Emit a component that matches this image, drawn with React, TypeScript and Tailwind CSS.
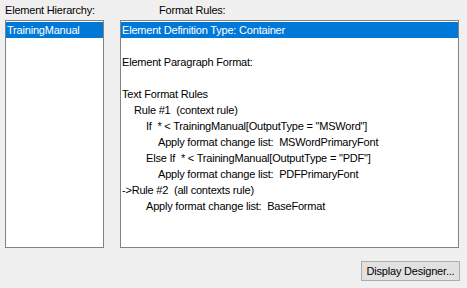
import React from "react";

const rules: { text: string; indent: number; selected?: boolean }[] = [
    { text: "Element Definition Type: Container", indent: 0, selected: true },
    { text: "", indent: 0 },
    { text: "Element Paragraph Format:", indent: 0 },
    { text: "", indent: 0 },
    { text: "Text Format Rules", indent: 0 },
    { text: "Rule #1  (context rule)", indent: 1 },
    { text: "If  * < TrainingManual[OutputType = \"MSWord\"]", indent: 2 },
    { text: "Apply format change list:  MSWordPrimaryFont", indent: 3 },
    { text: "Else If  * < TrainingManual[OutputType = \"PDF\"]", indent: 2 },
    { text: "Apply format change list:  PDFPrimaryFont", indent: 3 },
    { text: "->Rule #2  (all contexts rule)", indent: 0 },
    { text: "Apply format change list:  BaseFormat", indent: 2 },
];

const indentClass = ["pl-[1px]", "pl-[13px]", "pl-[25px]", "pl-[37px]"];

export default function App() {
    return (
        <div className="w-[467px] h-[288px] bg-[#f0f0f0] text-black text-[11px] tracking-[-0.2px] leading-[16px] flex flex-col" style={{ fontFamily: '"Liberation Sans", Arial, sans-serif' }}>
            {/* labels */}
            <div className="flex h-[20px] items-center">
                <span className="pl-[5px] w-[159px]">Element Hierarchy:</span>
                <span>Format Rules:</span>
            </div>

            {/* lists */}
            <div className="flex pl-[5px] gap-[16px]">
                <div className="w-[99px] h-[228px] bg-white border border-[#828282] py-[1px]">
                    <div className="h-[16px] bg-[#0078d7] text-white pl-[1px] whitespace-pre">TrainingManual</div>
                </div>
                <div className="w-[339px] h-[228px] bg-white border border-[#828282] py-[1px]">
                    {rules.map((r, i) => (
                        <div key={i} className={`h-[16px] whitespace-pre ${indentClass[r.indent]} ${r.selected ? "bg-[#0078d7] text-white" : ""}`}>
                            {r.text}
                        </div>
                    ))}
                </div>
            </div>

            {/* button */}
            <div className="flex justify-end pr-[7px] mt-[13px]">
                <button className="w-[99px] h-[20px] bg-[#e1e1e1] border border-[#adadad] flex items-center justify-center leading-none">
                    Display Designer...
                </button>
            </div>
        </div>
    );
}
